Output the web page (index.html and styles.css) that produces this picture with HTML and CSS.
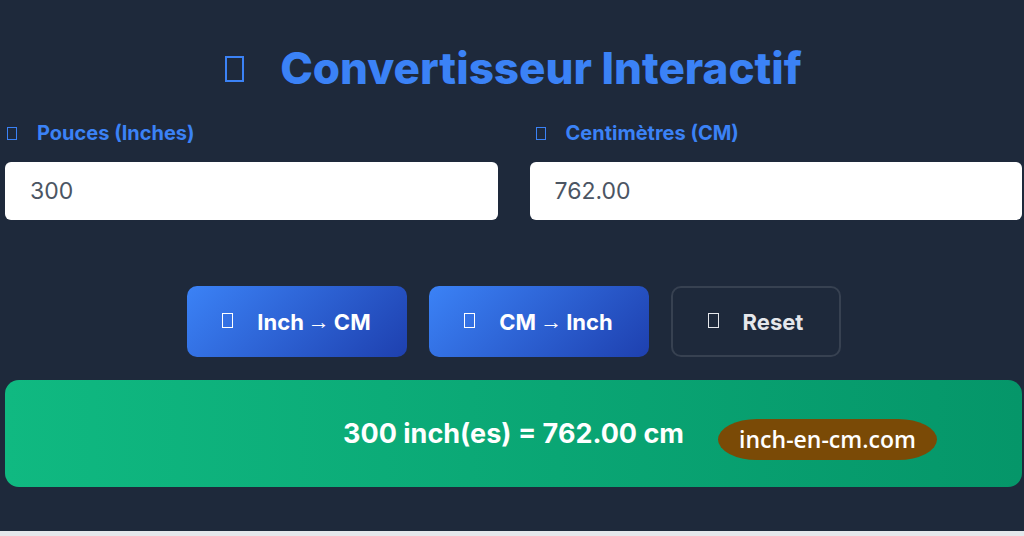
FILE: index.html
```html
<!DOCTYPE html>
<html lang="fr">
<head>
  <meta charset="UTF-8">
  <meta name="viewport" content="width=device-width, initial-scale=1.0">
  <title>Convertisseur Interactif</title>
  <link rel="stylesheet" href="styles.css">
</head>
<body>
  <div class="app">
    <h1 class="title"><span class="tofu tofu-lg"></span>Convertisseur Interactif</h1>

    <div class="fields">
      <div class="field">
        <label class="label" for="inches"><span class="tofu tofu-sm"></span>Pouces (Inches)</label>
        <input type="text" id="inches" class="textbox" value="300">
      </div>
      <div class="field">
        <label class="label" for="cm"><span class="tofu tofu-sm"></span>Centimètres (CM)</label>
        <input type="text" id="cm" class="textbox" value="762.00">
      </div>
    </div>

    <div class="actions">
      <button class="btn btn-blue" onclick="toCm()"><span class="tofu tofu-btn"></span>Inch<span class="arrow">→</span>CM</button>
      <button class="btn btn-blue" onclick="toInch()"><span class="tofu tofu-btn"></span>CM<span class="arrow">→</span>Inch</button>
      <button class="btn btn-ghost" onclick="reset()"><span class="tofu tofu-btn"></span>Reset</button>
    </div>

    <div class="result">
      <span id="result">300 inch(es) = 762.00 cm</span>
      <span class="badge">inch-en-cm.com</span>
    </div>
  </div>

  <script>
    function toCm() {
      const v = parseFloat(document.getElementById('inches').value) || 0;
      const cm = (v * 2.54).toFixed(2);
      document.getElementById('cm').value = cm;
      document.getElementById('result').textContent = `${v} inch(es) = ${cm} cm`;
    }

    function toInch() {
      const v = parseFloat(document.getElementById('cm').value) || 0;
      const inch = (v / 2.54).toFixed(2);
      document.getElementById('inches').value = inch;
      document.getElementById('result').textContent = `${v} cm = ${inch} inch(es)`;
    }

    function reset() {
      document.getElementById('inches').value = '';
      document.getElementById('cm').value = '';
      document.getElementById('result').textContent = '';
    }
  </script>
</body>
</html>
```

FILE: styles.css
```css
html, body {
  margin: 0;
  height: 100%;
  background-color: #e5e7eb;
}
body {
  font-family: Inter, "Noto Sans", sans-serif;
}
.app {
  box-sizing: border-box;
  height: 531px;
  padding: 44px 2px 0 5px;
  background-color: #1e293b;
}
.title {
  margin: 0 0 30px;
  text-align: center;
  font-size: 44px;
  line-height: 48px;
  font-weight: 800;
  color: #3b82f6;
}
.tofu {
  display: inline-block;
  box-sizing: border-box;
  border: 1.5px solid currentColor;
  vertical-align: middle;
}
.tofu-lg {
  width: 19px;
  height: 26px;
  margin: -6px 36px 0 0;
  border-width: 2px;
}
.tofu-sm {
  width: 10px;
  height: 13px;
  margin: -3px 20px 0 2px;
}
.tofu-btn {
  width: 11px;
  height: 15px;
  margin: -3px 24px 0 0;
}
.arrow {
  margin: 0 4px;
  font-family: "Liberation Sans", sans-serif;
  font-weight: 400;
}
.fields {
  display: grid;
  grid-template-columns: 1fr 1fr;
  gap: 32px;
}
.field:last-child .label {
  padding-left: 4px;
}
.label {
  display: block;
  margin-bottom: 18px;
  font-size: 20px;
  line-height: 22px;
  font-weight: 700;
  color: #3b82f6;
}
.textbox {
  display: block;
  box-sizing: border-box;
  width: 100%;
  height: 58px;
  padding: 0 25px;
  border: none;
  border-radius: 6px;
  background-color: #ffffff;
  font-family: inherit;
  font-size: 23px;
  color: #4b5563;
  outline: none;
}
.actions {
  display: flex;
  justify-content: center;
  gap: 22px;
  margin-top: 66px;
}
.btn {
  display: flex;
  align-items: center;
  justify-content: center;
  height: 71px;
  padding: 0 20px;
  border-radius: 10px;
  font-family: inherit;
  font-size: 22px;
  font-weight: 700;
  white-space: pre;
  color: #ffffff;
  cursor: pointer;
}
.btn-blue {
  width: 220px;
  border: none;
  background: linear-gradient(135deg, #3b82f6, #1e40af);
}
.btn-ghost {
  width: 170px;
  border: 2px solid #374151;
  background: transparent;
  color: #e5e7eb;
}
.result {
  position: relative;
  display: flex;
  align-items: center;
  justify-content: center;
  height: 107px;
  margin-top: 23px;
  border-radius: 14px;
  background: linear-gradient(90deg, #10b981, #059669);
  font-size: 27px;
  font-weight: 700;
  color: #ffffff;
}
.badge {
  position: absolute;
  left: 713px;
  top: 39px;
  width: 219px;
  height: 41px;
  border-radius: 40px / 21px;
  background-color: #7a4a06;
  font-family: "Open Sans", sans-serif;
  font-size: 23px;
  font-weight: 600;
  line-height: 41px;
  text-align: center;
}
```
